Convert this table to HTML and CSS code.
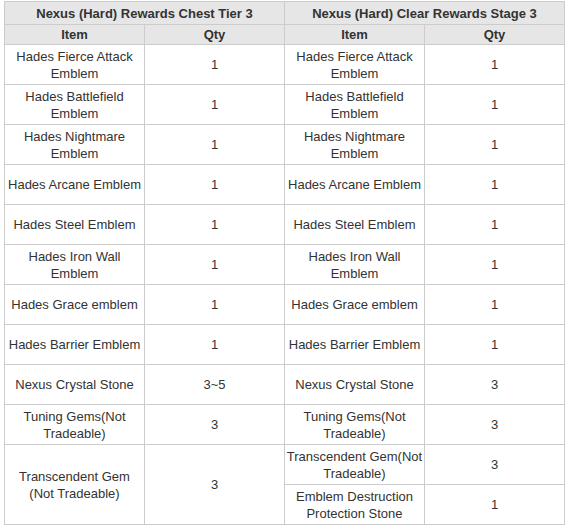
FILE: index.html
```html
<!DOCTYPE html>
<html>
<head>
<meta charset="utf-8">
<link rel="stylesheet" href="styles.css">
</head>
<body>
<table class="rewards">
  <colgroup><col class="c"><col class="c"><col class="c"><col class="c"></colgroup>
  <tr class="title">
    <th colspan="2">Nexus (Hard) Rewards Chest Tier 3</th>
    <th colspan="2">Nexus (Hard) Clear Rewards Stage 3</th>
  </tr>
  <tr class="head">
    <th>Item</th><th>Qty</th><th>Item</th><th>Qty</th>
  </tr>
  <tr><td>Hades Fierce Attack Emblem</td><td>1</td><td>Hades Fierce Attack Emblem</td><td>1</td></tr>
  <tr><td>Hades Battlefield Emblem</td><td>1</td><td>Hades Battlefield Emblem</td><td>1</td></tr>
  <tr><td>Hades Nightmare Emblem</td><td>1</td><td>Hades Nightmare Emblem</td><td>1</td></tr>
  <tr><td>Hades Arcane Emblem</td><td>1</td><td>Hades Arcane Emblem</td><td>1</td></tr>
  <tr><td>Hades Steel Emblem</td><td>1</td><td>Hades Steel Emblem</td><td>1</td></tr>
  <tr><td>Hades Iron Wall Emblem</td><td>1</td><td>Hades Iron Wall Emblem</td><td>1</td></tr>
  <tr><td>Hades Grace emblem</td><td>1</td><td>Hades Grace emblem</td><td>1</td></tr>
  <tr><td>Hades Barrier Emblem</td><td>1</td><td>Hades Barrier Emblem</td><td>1</td></tr>
  <tr><td>Nexus Crystal Stone</td><td>3~5</td><td>Nexus Crystal Stone</td><td>3</td></tr>
  <tr><td>Tuning Gems(Not Tradeable)</td><td>3</td><td>Tuning Gems(Not Tradeable)</td><td>3</td></tr>
  <tr><td rowspan="2">Transcendent Gem (Not Tradeable)</td><td rowspan="2">3</td><td>Transcendent Gem(Not Tradeable)</td><td>3</td></tr>
  <tr><td>Emblem Destruction Protection Stone</td><td>1</td></tr>
</table>
</body>
</html>
```
FILE: styles.css
```css
html, body {
  margin: 0;
  padding: 0;
  background: #fff;
}
body {
  padding: 1px 0 0 4px;
  font-family: "Liberation Sans", Arial, sans-serif;
  font-size: 13px;
  color: #333;
}
.rewards {
  border-collapse: collapse;
  table-layout: fixed;
  width: 561px;
  border: 1px solid #ccc;
}
.rewards .c {
  width: 140px;
}
.rewards th,
.rewards td {
  border: 1px solid #ccc;
  padding: 0 1px;
  text-align: center;
  vertical-align: middle;
  line-height: 17px;
}
.rewards th {
  background: #e6e6e6;
  font-weight: bold;
  color: #333;
}
.rewards .title th {
  height: 22px;
}
.rewards .head th {
  height: 19px;
}
.rewards td {
  height: 39px;
}
```
